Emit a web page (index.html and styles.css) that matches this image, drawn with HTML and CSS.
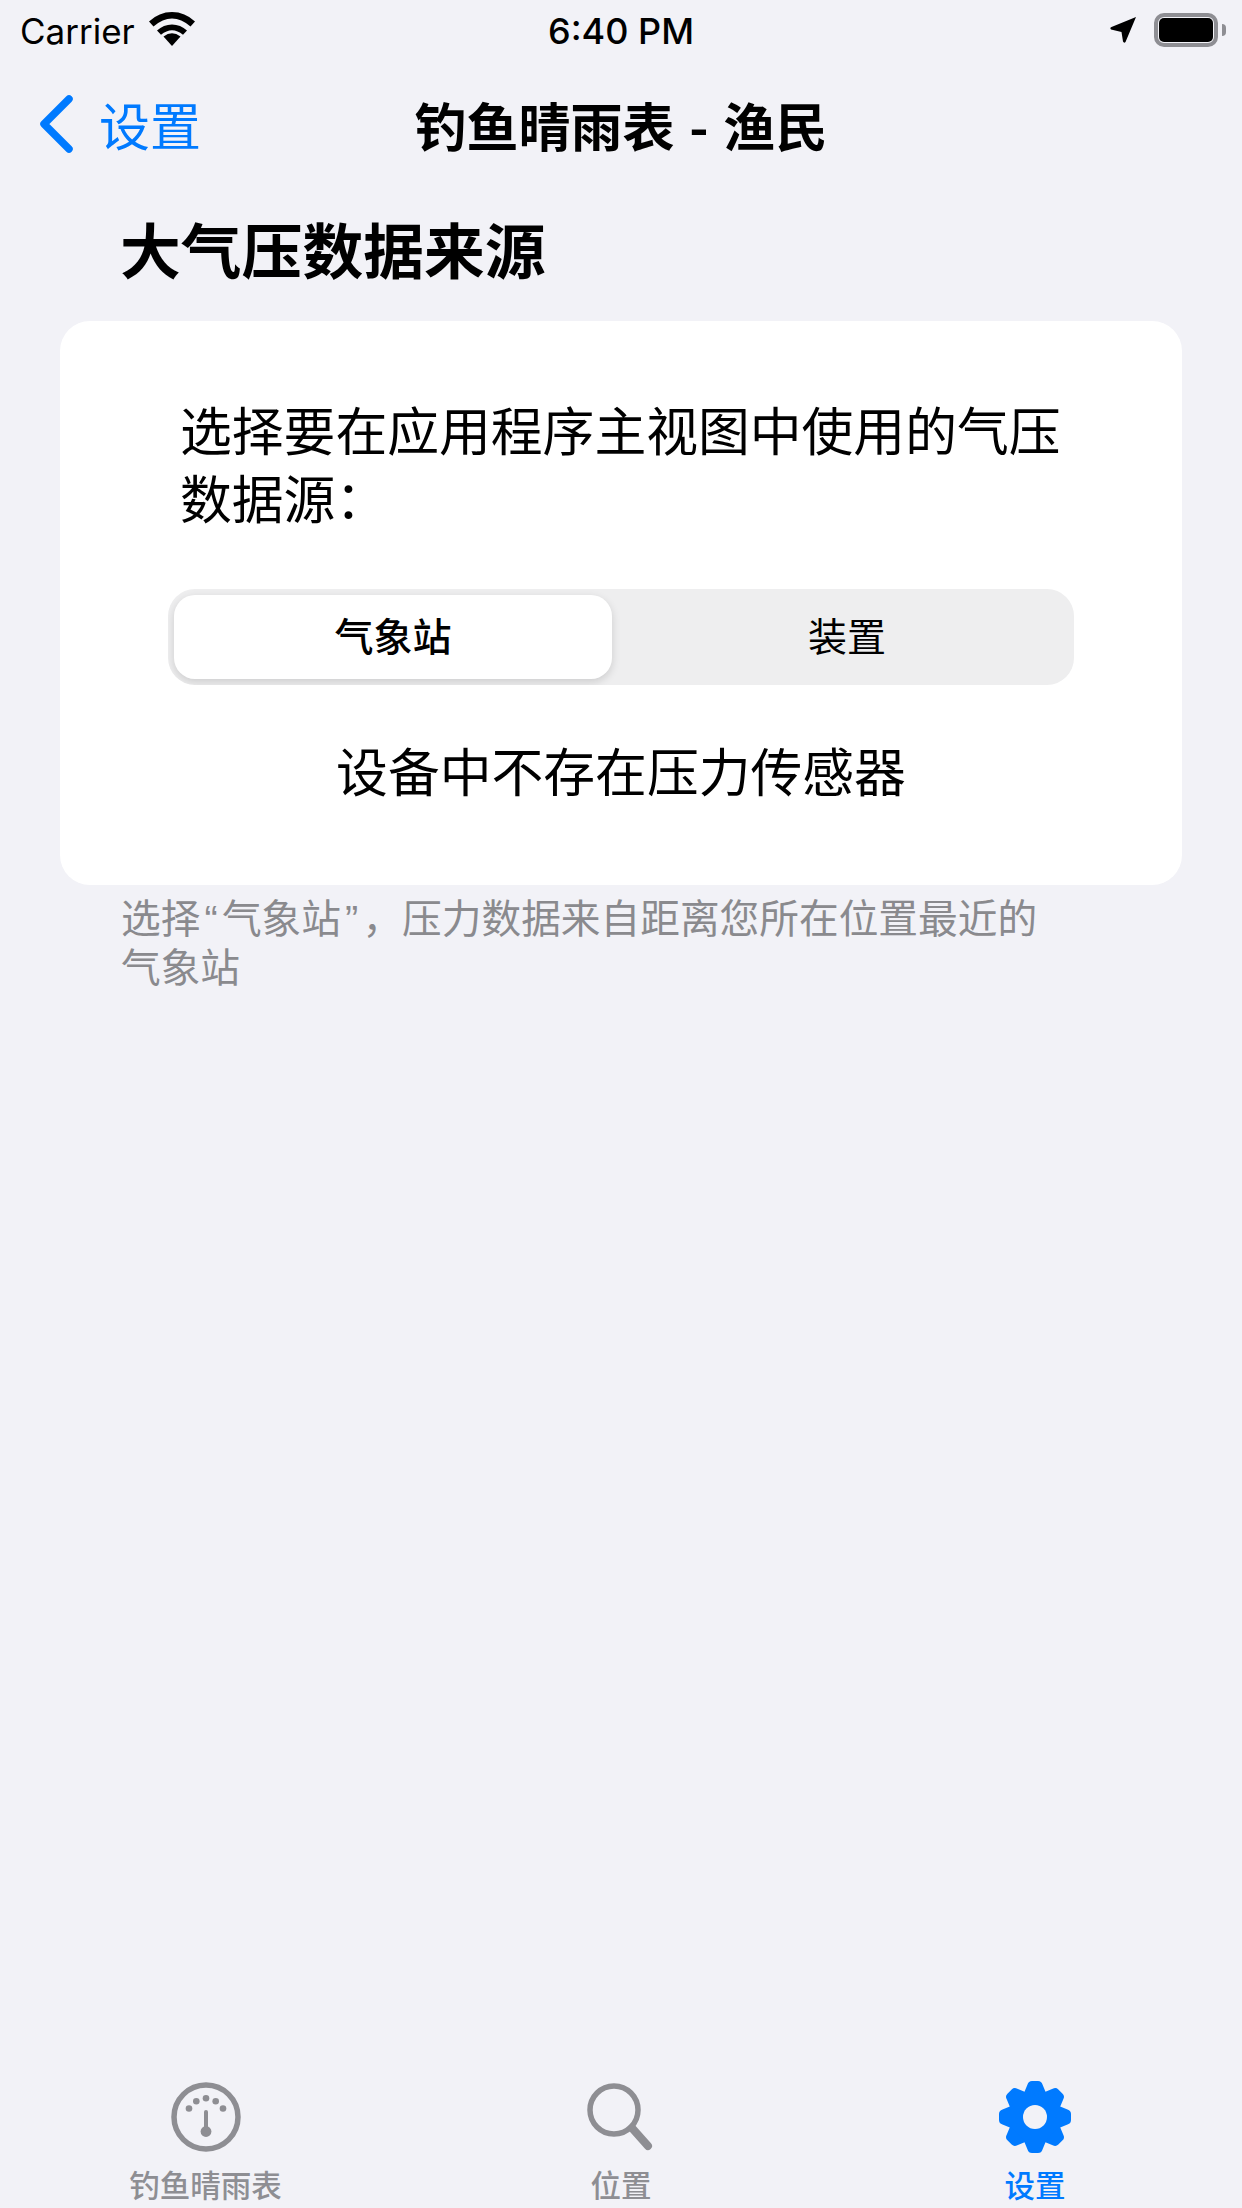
FILE: index.html
```html
<!DOCTYPE html>
<html lang="zh-CN">
<head>
  <meta charset="UTF-8">
  <title>大气压数据来源</title>
  <meta name="viewport" content="width=device-width, initial-scale=1.0">
  <link rel="stylesheet" href="styles.css">
</head>
<body>
  <div class="status-bar">
    <div class="status-left">
      <span>Carrier</span>
      <svg class="wifi" width="46" height="34" viewBox="0 0 46 34">
        <path d="M23 34 L14.500 24.600 Q23 17.800 31.500 24.600 Z"/>
        <path d="M23 12.500 Q31.500 12.500 38 18.500 L34 22.800 Q23 13.800 12 22.800 L8 18.500 Q14.500 12.500 23 12.500 Z"/>
        <path d="M23 0 Q36 0 46 9.500 L41.500 14.500 Q23 -1.500 4.500 14.500 L0 9.500 Q10 0 23 0 Z"/>
      </svg>
    </div>
    <div class="status-time">6:40 PM</div>
    <div class="status-right">
      <svg class="arrow" width="26" height="26" viewBox="0 0 26 26">
        <path d="M26 0 L15.500 25 Q14 26.500 13 24.500 L11.500 15 L1 12.500 Q-0.500 11 1.500 10 Z"/>
      </svg>
      <div class="battery"><div class="battery-fill"></div></div>
      <div class="battery-cap"></div>
    </div>
  </div>

  <div class="nav-bar">
    <div class="nav-back">
      <svg width="34" height="58" viewBox="0 0 34 58">
        <path d="M30 4 L5 29 L30 54" fill="none" stroke="#007aff" stroke-width="7.500" stroke-linecap="round" stroke-linejoin="round"/>
      </svg>
      <span>设置</span>
    </div>
    <div class="nav-title">钓鱼晴雨表 - 渔民</div>
  </div>

  <h2 class="section-title">大气压数据来源</h2>
  <div class="card">
    <p class="card-text">选择要在应用程序主视图中使用的气压数据源：</p>
    <div class="segment">
      <div class="segment-item active">气象站</div>
      <div class="segment-item">装置</div>
    </div>
    <p class="card-note">设备中不存在压力传感器</p>
  </div>
  <p class="section-footer">选择<span class="quote">“</span>气象站<span class="quote">”</span>，压力数据来自距离您所在位置最近的<br>气象站</p>

  <div class="tab-bar">
    <div class="tab first">
      <svg width="72" height="72" viewBox="0 0 72 72" fill="#8e8e93">
        <circle cx="36" cy="36" r="32" fill="none" stroke="#8e8e93" stroke-width="5.500"/>
        <circle cx="19" cy="27.500" r="3.300"/>
        <circle cx="26.300" cy="20.300" r="3.300"/>
        <circle cx="36" cy="17.300" r="3.300"/>
        <circle cx="45.700" cy="20.300" r="3.300"/>
        <circle cx="53" cy="27.500" r="3.300"/>
        <rect x="34" y="29" width="4" height="22" rx="2"/>
        <circle cx="36" cy="50.500" r="5.400"/>
      </svg>
      <span>钓鱼晴雨表</span>
    </div>
    <div class="tab">
      <svg width="72" height="72" viewBox="0 0 72 72">
        <circle cx="29" cy="29" r="24" fill="none" stroke="#8e8e93" stroke-width="5.500"/>
        <path d="M47 47 L63 65" fill="none" stroke="#8e8e93" stroke-width="8" stroke-linecap="round"/>
      </svg>
      <span>位置</span>
    </div>
    <div class="tab active">
      <svg width="72" height="72" viewBox="-36 -36 72 72" fill="#007aff">
        <defs>
          <path id="tooth" d="M-11 -24 L-7.500 -32.500 Q-6.500 -36 -3 -36 L3 -36 Q6.500 -36 7.500 -32.500 L11 -24 Z"/>
        </defs>
        <circle r="27"/>
        <use href="#tooth"/>
        <use href="#tooth" transform="rotate(45)"/>
        <use href="#tooth" transform="rotate(90)"/>
        <use href="#tooth" transform="rotate(135)"/>
        <use href="#tooth" transform="rotate(180)"/>
        <use href="#tooth" transform="rotate(225)"/>
        <use href="#tooth" transform="rotate(270)"/>
        <use href="#tooth" transform="rotate(315)"/>
        <circle r="12" fill="#f2f2f7"/>
      </svg>
      <span>设置</span>
    </div>
  </div>
</body>
</html>
```

FILE: styles.css
```css
:root {
  --bg: #f2f2f7;
  --blue: #007aff;
  --gray: #8e8e93;
}

html, body {
  height: 100%;
}

body {
  margin: 0;
  display: flex;
  flex-direction: column;
  background-color: var(--bg);
  color: #000000;
  font-family: "Noto Sans CJK SC", "Noto Sans", sans-serif;
  overflow: hidden;
}

p, h2 {
  margin: 0;
}

/* status bar */
.status-bar {
  height: 60px;
  flex: none;
  display: grid;
  grid-template-columns: 1fr auto 1fr;
  align-items: center;
  padding: 0 20px;
  font-family: Inter, "Liberation Sans", sans-serif;
  font-size: 35px;
}

.status-left {
  display: flex;
  align-items: center;
  gap: 14px;
}

.status-left span {
  padding-top: 2px;
}

.wifi {
  margin-top: -3px;
}

.status-time {
  padding-top: 2px;
  font-weight: 500;
  font-size: 36px;
}

.status-right {
  display: flex;
  align-items: center;
  justify-content: flex-end;
  margin-right: -4px;
}

.arrow {
  margin-right: 18px;
}

.battery {
  box-sizing: border-box;
  width: 64px;
  height: 34px;
  padding: 1px;
  border: 4px solid var(--gray);
  border-radius: 10px;
}

.battery-fill {
  height: 100%;
  background-color: #000000;
  border-radius: 5px;
}

.battery-cap {
  width: 4px;
  height: 12px;
  margin-left: 4px;
  background-color: var(--gray);
  border-radius: 0 4px 4px 0;
}

/* navigation */
.nav-bar {
  height: 128px;
  flex: none;
  display: grid;
  grid-template-columns: 1fr auto 1fr;
  align-items: center;
  padding: 0 39px;
  font-size: 52px;
}

.nav-back {
  display: flex;
  align-items: center;
  gap: 26px;
  color: var(--blue);
  font-size: 51px;
}

.nav-title {
  font-weight: 700;
  word-spacing: 3px;
}

/* settings section */
.section-title {
  margin: 27px 0 0 120px;
  font-size: 60.800px;
  font-weight: 700;
  line-height: 66px;
}

.card {
  margin: 40px 60px 0;
  padding: 74px 108px 81px;
  background-color: #ffffff;
  border-radius: 30px;
}

.card-text {
  padding-left: 12px;
  font-size: 51.800px;
  line-height: 68px;
}

.segment {
  display: flex;
  height: 96px;
  margin-top: 58px;
  padding: 6px;
  box-sizing: border-box;
  background-color: #eeeeef;
  border-radius: 27px;
  overflow: hidden;
  font-size: 39px;
}

.segment-item {
  flex: 1;
  display: flex;
  align-items: center;
  justify-content: center;
  padding: 0 0 6px 14px;
}

.segment-item.active {
  flex: none;
  width: 438px;
  padding-left: 0;
  background-color: #ffffff;
  border-radius: 21px;
  box-shadow: 0 3px 9px rgba(0, 0, 0, 0.14);
  font-weight: 500;
}

.card-note {
  margin-top: 51px;
  font-size: 51.800px;
  line-height: 68px;
  text-align: center;
}

.section-footer {
  margin: 8px 0 0 121px;
  width: 930px;
  color: #8a8a8e;
  font-size: 39.700px;
  line-height: 46px;
}

/* narrow quotes around the station name */
.quote {
  display: inline-block;
  width: 19.500px;
  margin: 0 1px;
  font-family: "Liberation Sans", sans-serif;
  text-align: center;
}

/* tab bar */
.tab-bar {
  margin-top: auto;
  display: grid;
  grid-template-columns: repeat(3, 1fr);
  height: 127px;
  flex: none;
  color: var(--gray);
  font-size: 30.500px;
}

.tab {
  display: flex;
  flex-direction: column;
  align-items: center;
}

.tab.first {
  padding-right: 3px;
}

.tab span {
  margin-top: 10px;
  line-height: 42px;
  font-weight: 500;
}

.tab.active {
  color: var(--blue);
}
```
